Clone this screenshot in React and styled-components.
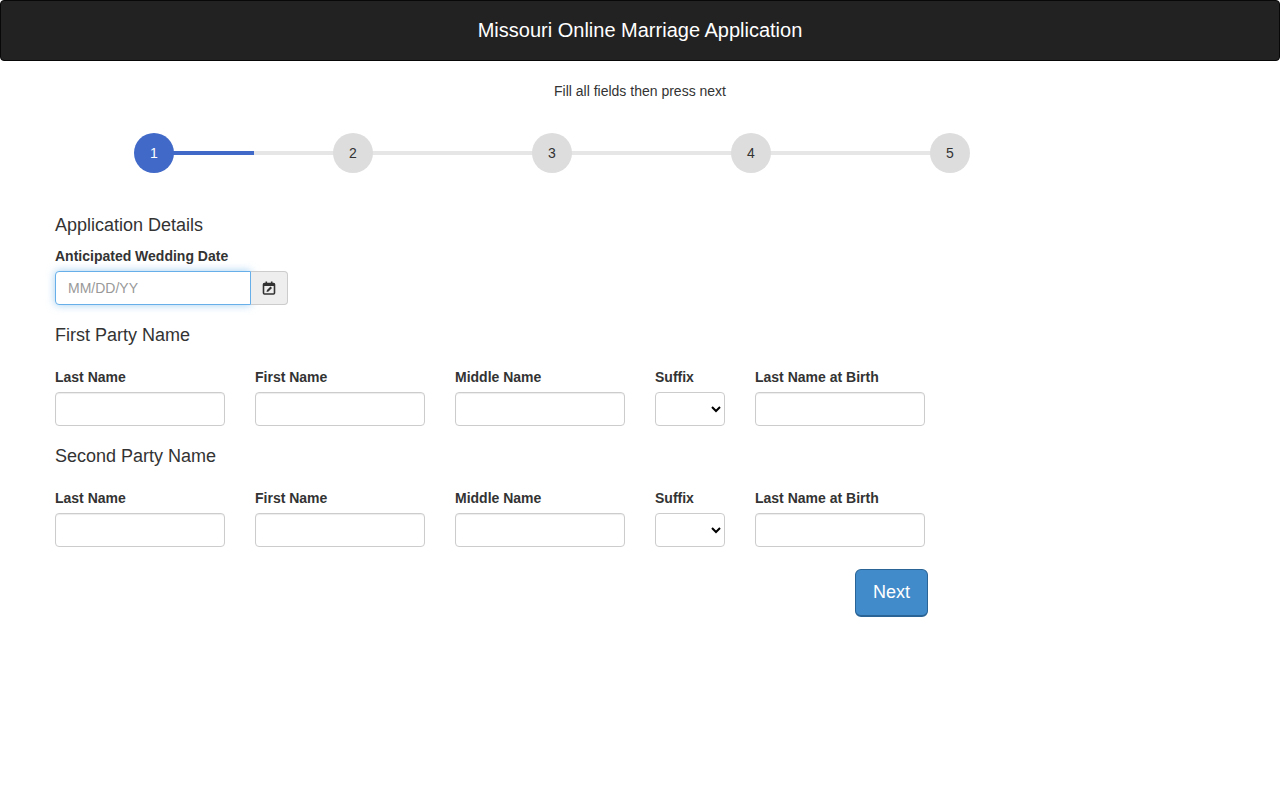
import React from "react";
import styled, { createGlobalStyle } from "styled-components";

const G = createGlobalStyle`
  body { margin:0; font-family:"Liberation Sans",Arial,sans-serif; color:#333; background:#fff; }
  * { box-sizing:border-box; }
`;
const Header = styled.header`
  height:61px; background:#222; border:1px solid #080808; border-radius:4px;
  display:flex; align-items:center; justify-content:center; color:#fff; font-size:20px;
`;
const Sub = styled.div`text-align:center; font-size:14px; margin-top:22px; height:20px;`;
const Stepper = styled.div`
  margin:30px 0 0 134px; width:836px; height:40px; display:flex; justify-content:space-between;
  align-items:center; position:relative;
`;
const Track = styled.div`
  position:absolute; left:20px; right:20px; top:18px; height:4px; background:#e6e6e6; z-index:0;
`;
const Fill = styled.div`position:absolute; left:20px; width:100px; top:18px; height:4px; background:#4169c8; z-index:1;`;
const Circle = styled.div`
  width:40px; height:40px; border-radius:50%; z-index:2; display:flex; align-items:center; justify-content:center;
  font-size:14px; background:${p=>p.$active?"#4169c8":"#ddd"}; color:${p=>p.$active?"#fff":"#333"};
`;
const Main = styled.div`padding:0 55px;`;
const H = styled.h3`font-size:18px; font-weight:normal; margin:0; line-height:20px;`;
const Label = styled.label`display:block; font-weight:bold; font-size:14px; line-height:20px;`;
const DateGroup = styled.div`display:flex; margin-top:5px; width:233px;`;
const DateInput = styled.input`
  width:196px; height:34px; border:1px solid #66afe9; border-radius:4px 0 0 4px; padding:6px 12px;
  font-size:14px; font-family:inherit; outline:none; box-shadow:0 0 8px rgba(102,175,233,.6);
  &::placeholder{color:#999;}
`;
const Addon = styled.div`
  width:37px; height:34px; border:1px solid #ccc; border-left:none; background:#eee; border-radius:0 4px 4px 0;
  display:flex; align-items:center; justify-content:center;
`;
const Row = styled.div`display:flex; gap:30px; margin-top:22px;`;
const Field = styled.div`width:${p=>p.$w}px;`;
const Input = styled.input`
  display:block; width:100%; height:34px; margin-top:5px; border:1px solid #ccc; border-radius:4px;
  box-shadow:inset 0 1px 1px rgba(0,0,0,.075);
`;
const Select = styled.select`
  display:block; width:100%; height:34px; margin-top:5px; border:1px solid #ccc; border-radius:4px; background:#fff;
`;
const Btn = styled.button`
  display:block; margin:22px 0 0 800px; width:73px; height:48px; background:#428bca; color:#fff;
  border:1px solid #2a6496; border-bottom-width:2px; border-radius:6px; font-size:18px; font-family:inherit;
`;

const fields = [["Last Name",170],["First Name",170],["Middle Name",170],["Suffix",70,true],["Last Name at Birth",170]];
const NameRow = () => (
  <Row>{fields.map(([l,w,s])=>(
    <Field key={l} $w={w}><Label>{l}</Label>{s?<Select><option></option></Select>:<Input/>}</Field>
  ))}</Row>
);

export default function App(){
  return <>
    <G/>
    <Header>Missouri Online Marriage Application</Header>
    <Sub>Fill all fields then press next</Sub>
    <Stepper><Track/><Fill/>{[1,2,3,4,5].map(n=><Circle key={n} $active={n===1}>{n}</Circle>)}</Stepper>
    <Main>
      <H style={{marginTop:42}}>Application Details</H>
      <Label style={{marginTop:11}}>Anticipated Wedding Date</Label>
      <DateGroup>
        <DateInput placeholder="MM/DD/YY"/>
        <Addon><svg width="14" height="14" viewBox="0 0 14 14"><rect x="1.5" y="2.5" width="11" height="10.5" rx="1" fill="none" stroke="#333" strokeWidth="1.6"/><rect x="1.5" y="2.5" width="11" height="2.5" fill="#333"/><rect x="3.5" y="0.5" width="1.6" height="3" fill="#333"/><rect x="8.9" y="0.5" width="1.6" height="3" fill="#333"/><path d="M4.5 11l.5-2 3.5-3.5 1.5 1.5L6.5 10.5z" fill="#333"/></svg></Addon>
      </DateGroup>
      <H style={{marginTop:20}}>First Party Name</H>
      <NameRow/>
      <H style={{marginTop:20}}>Second Party Name</H>
      <NameRow/>
      <Btn>Next</Btn>
    </Main>
  </>;
}
